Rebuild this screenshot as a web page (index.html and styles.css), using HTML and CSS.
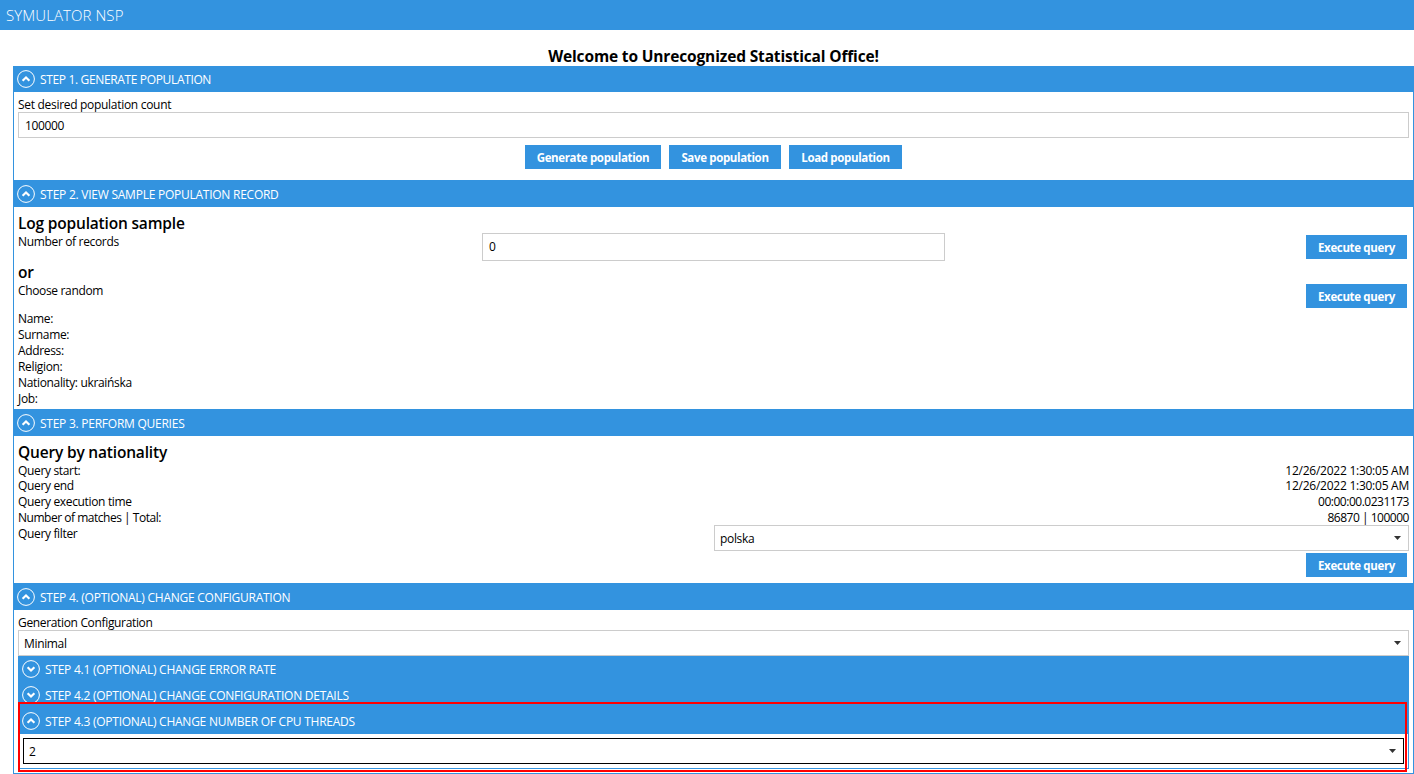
FILE: index.html
```
<!DOCTYPE html>
<html lang="en">
<head>
<meta charset="utf-8">
<title>SYMULATOR NSP</title>
<link rel="stylesheet" href="styles.css">
</head>
<body>
<svg class="defs" width="0" height="0">
  <symbol id="up" viewBox="0 0 18 18"><circle cx="9" cy="9" r="8.4" fill="none" stroke="#fff" stroke-width="1"/><path d="M5.6 10.7 9 7.5l3.4 3.2" fill="none" stroke="#fff" stroke-width="2.2"/></symbol>
  <symbol id="down" viewBox="0 0 18 18"><circle cx="9" cy="9" r="8.4" fill="none" stroke="#fff" stroke-width="1"/><path d="M5.6 7.3 9 10.5l3.4-3.2" fill="none" stroke="#fff" stroke-width="2.2"/></symbol>
</svg>
<header class="titlebar"><span>SYMULATOR NSP</span></header>
<main class="page">
  <h1 class="welcome"><span>Welcome to Unrecognized Statistical Office!</span></h1>
  <div class="panel">
    <section class="step step1">
      <h2 class="head"><svg class="ico"><use href="#up"/></svg><span>STEP 1. GENERATE POPULATION</span></h2>
      <div class="body">
        <div class="line"><span>Set desired population count</span></div>
        <div class="field"><span>100000</span></div>
        <div class="buttons"><button class="btn generate"><span>Generate population</span></button><button class="btn save"><span>Save population</span></button><button class="btn load"><span>Load population</span></button></div>
      </div>
    </section>
    <section class="step step2">
      <h2 class="head tall"><svg class="ico"><use href="#up"/></svg><span>STEP 2. VIEW SAMPLE POPULATION RECORD</span></h2>
      <div class="body">
        <h3 class="sub"><span>Log population sample</span></h3>
        <div class="record"><div class="line"><span>Number of records</span></div><div class="field count"><span>0</span></div><button class="btn execute"><span>Execute query</span></button></div>
        <h3 class="sub"><span>or</span></h3>
        <div class="record random"><div class="line"><span>Choose random</span></div><button class="btn execute"><span>Execute query</span></button></div>
        <div class="person"><div class="line"><span>Name:</span></div><div class="line"><span>Surname:</span></div><div class="line"><span>Address:</span></div><div class="line"><span>Religion:</span></div><div class="line"><span>Nationality: ukraińska</span></div><div class="line"><span>Job:</span></div></div>
      </div>
    </section>
    <section class="step step3">
      <h2 class="head tall"><svg class="ico"><use href="#up"/></svg><span>STEP 3. PERFORM QUERIES</span></h2>
      <div class="body">
        <h3 class="sub"><span>Query by nationality</span></h3>
        <div class="line pair first"><span>Query start:</span><span class="date">12/26/2022 1:30:05 AM</span></div>
        <div class="line pair"><span>Query end</span><span class="date">12/26/2022 1:30:05 AM</span></div>
        <div class="line pair"><span>Query execution time</span><span class="tight">00:00:00.0231173</span></div>
        <div class="line pair"><span class="tight">Number of matches | Total:</span><span class="tight">86870 | 100000</span></div>
        <div class="filter"><div class="line"><span>Query filter</span></div><div class="field select"><span>polska</span><i class="caret"></i></div></div>
        <button class="btn execute run"><span>Execute query</span></button>
      </div>
    </section>
    <section class="step step4">
      <h2 class="head tall"><svg class="ico"><use href="#up"/></svg><span>STEP 4. (OPTIONAL) CHANGE CONFIGURATION</span></h2>
      <div class="body">
        <div class="line"><span>Generation Configuration</span></div>
        <div class="field select"><span>Minimal</span><i class="caret"></i></div>
        <div class="nested">
          <h2 class="head"><svg class="ico"><use href="#down"/></svg><span>STEP 4.1 (OPTIONAL) CHANGE ERROR RATE</span></h2>
          <h2 class="head"><svg class="ico"><use href="#down"/></svg><span>STEP 4.2 (OPTIONAL) CHANGE CONFIGURATION DETAILS</span></h2>
          <h2 class="head"><svg class="ico"><use href="#up"/></svg><span>STEP 4.3 (OPTIONAL) CHANGE NUMBER OF CPU THREADS</span></h2>
          <div class="threads"><div class="field select focused"><span>2</span><i class="caret"></i></div></div>
          <div class="highlight"></div>
        </div>
      </div>
    </section>
  </div>
</main>
</body>
</html>
```
FILE: styles.css
```
* { box-sizing: border-box; }
body { margin: 0; width: 1414px; height: 774px; overflow: hidden; background: #fff; color: #000; font: 12px/16px "Open Sans", "Noto Sans", sans-serif; letter-spacing: -0.34px; }
h1, h2, h3 { margin: 0; font-weight: 400; }
span { white-space: nowrap; }
.defs { position: absolute; }
.titlebar { height: 30px; padding: 0 6px; background: #3393df; color: #fff; font-size: 15px; font-weight: 300; line-height: 31px; letter-spacing: 0.08px; }
.page { padding-left: 13px; }
.welcome { height: 36px; padding-top: 16px; font-size: 15.5px; line-height: 20px; font-weight: 700; letter-spacing: -0.15px; text-align: center; }
.panel { height: 708px; border: 1px solid #3393df; border-top: 0; }
.head { display: flex; align-items: center; gap: 5px; height: 26px; padding-left: 3px; background: #3393df; color: #fff; font-size: 12px; line-height: 16px; letter-spacing: -0.25px; }
.head span { padding-top: 2px; }
.head.tall { height: 27px; }
.ico { width: 18px; height: 18px; flex: none; }
.body { padding: 0 4px; }
.line { height: 16px; }
.field { display: flex; align-items: center; height: 26px; padding: 0 6px; border: 1px solid #ccc; background: #fff; }
.field span { padding-top: 2px; }
.select { justify-content: space-between; padding: 0 7px 0 5px; }
.caret { width: 7px; height: 4px; background: #333; clip-path: polygon(0 0, 100% 0, 50% 100%); }
.btn { display: flex; align-items: center; justify-content: center; height: 24px; padding: 2px 0 0; border: 0; background: #3393df; color: #fff; font: 700 11.5px/16px "Open Sans", "Noto Sans", sans-serif; letter-spacing: -0.35px; }
.sub { height: 22px; font-size: 15.5px; line-height: 22px; font-weight: 600; letter-spacing: -0.18px; }
.tight { letter-spacing: -0.48px; }
.date { letter-spacing: -0.25px; }
.step1 { height: 114px; }
.step1 .head { letter-spacing: -0.35px; }
.step1 .body { padding-top: 5px; }
.step1 .line { height: 15px; letter-spacing: -0.3px; }
.buttons { display: flex; justify-content: center; gap: 8px; padding-top: 7px; }
.generate { width: 136px; }
.save { width: 112px; }
.load { width: 113px; }
.execute { width: 101px; }
.step2 { height: 229px; }
.step2 .body { padding-top: 5px; }
.record { display: grid; grid-template-columns: 464px 463px 1fr; height: 27px; }
.record .execute { grid-column: 3; justify-self: end; margin: 1px 2px 0 0; }
.count { height: 28px; margin-top: -1px; }
.count span { padding-top: 0; }
.person { padding-top: 1px; }
.step3 { height: 174px; }
.step3 .body { padding-top: 5px; }
.pair { display: flex; justify-content: space-between; }
.pair.first { height: 15px; }
.filter { display: grid; grid-template-columns: 1fr 695px; height: 26px; }
.filter .field { margin-top: -1px; }
.run { margin: 1px 2px 0 auto; }
.step4 .body { padding-top: 5px; }
.step4 .line { height: 15px; }
.nested { position: relative; }
.nested .head { padding-left: 4px; }
.threads { height: 35px; padding: 4px 4px 0; border: 1px solid #3393df; border-top: 0; }
.focused { border-color: #000; }
.highlight { position: absolute; left: 0; right: 2px; top: 46px; height: 70px; border: 2px solid #f00; }
```
